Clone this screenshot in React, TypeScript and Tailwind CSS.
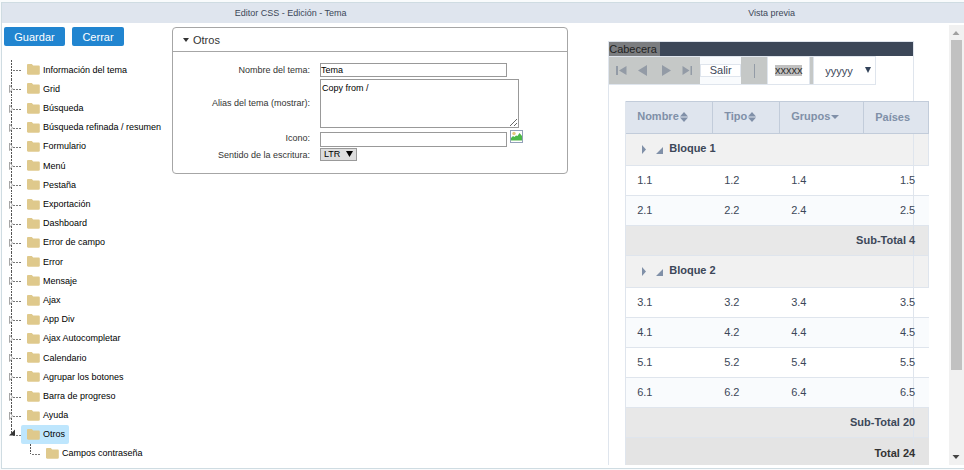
import React, { useState } from 'react';

const TREE_ITEMS = [
    'Información del tema',
    'Grid',
    'Búsqueda',
    'Búsqueda refinada / resumen',
    'Formulario',
    'Menú',
    'Pestaña',
    'Exportación',
    'Dashboard',
    'Error de campo',
    'Error',
    'Mensaje',
    'Ajax',
    'App Div',
    'Ajax Autocompletar',
    'Calendario',
    'Agrupar los botones',
    'Barra de progreso',
    'Ayuda',
    'Otros',
];

const BLOCKS = [
    {
        title: 'Bloque 1',
        rows: [
            ['1.1', '1.2', '1.4', '1.5'],
            ['2.1', '2.2', '2.4', '2.5'],
        ],
        subtotal: 'Sub-Total 4',
    },
    {
        title: 'Bloque 2',
        rows: [
            ['3.1', '3.2', '3.4', '3.5'],
            ['4.1', '4.2', '4.4', '4.5'],
            ['5.1', '5.2', '5.4', '5.5'],
            ['6.1', '6.2', '6.4', '6.5'],
        ],
        subtotal: 'Sub-Total 20',
    },
];

const FolderIcon = () => (
    <svg width="13" height="11" viewBox="0 0 13 11" fill="#dfc98c" className="shrink-0">
        <path d="M1.2 0h3.6l1.4 1.5h5.4c.8 0 1.2.5 1.2 1.2v6.8c0 .8-.4 1.2-1.2 1.2H1.2C.4 10.700 0 10.300 0 9.500V1.200C0 .4.4 0 1.200 0z" />
    </svg>
);

type BranchKind = 'first' | 'closed' | 'open' | 'leaf';

// Dotted connector on the left of every node
const Branch = ({ kind }: { kind: BranchKind }) => (
    <svg width="13" height="19" viewBox="0 0 13 19" fill="none" className="shrink-0">
        <path d={kind === 'open' || kind === 'leaf' ? 'M3.500 0v10' : 'M3.500 0v20'} stroke="#555" strokeDasharray="2 1" shapeRendering="crispEdges" />
        <path d="M5 10.500h8" stroke="#777" strokeDasharray="2 1" shapeRendering="crispEdges" />
        {kind === 'closed' && <path d="M1.500 6v7.500l3-3.700z" stroke="#a6a6a6" fill="#fff" />}
        {kind === 'open' && <path d="M7 4.500v6H1z" fill="#333" />}
    </svg>
);

const SortIcon = ({ down = false }: { down?: boolean }) => (
    <svg width="8" height="10" viewBox="0 0 8 10" fill="#8090a8" className="ml-px inline-block align-[-2px]">
        {!down && <path d="M4 0l4 4.500H0z" />}
        <path d={down ? 'M0 3h8L4 7z' : 'M0 5.500h8L4 10z'} />
    </svg>
);

const NavButton = ({ label, d }: { label: string; d: string }) => (
    <button type="button" aria-label={label} className="flex items-center justify-center">
        <svg width="11" height="11" viewBox="0 0 11 11" fill="#939ba6">
            <path d={d} />
        </svg>
    </button>
);

const Tree = () => {
    const [selected, setSelected] = useState('Otros');
    return (
        <div className="mt-3.5 whitespace-nowrap pl-1.5">
            <ul className="flex h-96 flex-col">
                {TREE_ITEMS.map((name, i) => (
                    <li key={name} className="flex flex-1 items-center">
                        <Branch kind={i === 0 ? 'first' : name === 'Otros' ? 'open' : 'closed'} />
                        <button
                            type="button"
                            onClick={() => setSelected(name)}
                            className={`flex h-full items-center gap-[3px] rounded-xs pl-1.5 pr-1 ${selected === name ? 'bg-[#bee6fd]' : ''}`}
                        >
                            <FolderIcon />
                            {name}
                        </button>
                    </li>
                ))}
            </ul>
            <div className="flex h-[18px] items-center pl-[19px]">
                <Branch kind="leaf" />
                <button type="button" className="flex items-center gap-[3px] pl-1.5">
                    <FolderIcon />
                    Campos contraseña
                </button>
            </div>
        </div>
    );
};

const ThemeForm = () => (
    <section className="mr-[11px] min-w-0 flex-1 self-start rounded-[4px] border border-[#a6a6a6] text-[#333]">
        <h2 className="flex h-6 items-center gap-1 border-b border-[#a6a6a6] pl-2.5 text-[11px]">
            <svg width="6" height="4" viewBox="0 0 6 4" fill="#333"><path d="M0 0h6L3 4z" /></svg>
            Otros
        </h2>
        <div className="grid grid-cols-[137px_1fr] gap-x-2.5 pb-3 pt-[11px]">
            <label htmlFor="name" className="self-center text-right">Nombre del tema:</label>
            <div>
                <input id="name" defaultValue="Tema" className="block h-3.5 w-[187px] border border-[#999] text-black" />
            </div>
            <label htmlFor="alias" className="self-center text-right">Alias del tema (mostrar):</label>
            <textarea id="alias" defaultValue="Copy from /" className="mt-0.5 block h-[49px] w-[199px] border border-[#999] px-px py-0.5 leading-3 text-black" />
            <label htmlFor="icon" className="self-center text-right">Icono:</label>
            <div className="flex items-start gap-[3px] pb-px pt-0.5">
                <input id="icon" className="mt-0.5 h-[15px] w-[187px] border border-[#999] text-black" />
                <button type="button" aria-label="Elegir icono">
                    <svg width="13" height="13" viewBox="0 0 13 13">
                        <rect x=".5" y=".5" width="12" height="12" fill="#fff" stroke="#93a0b8" />
                        <circle cx="4" cy="3.500" r="1.700" fill="#e5c77f" />
                        <path d="M1 10V8l2-2 1.500 1L6 5.500 7.500 6 9.500 3l2.500 3v4z" fill="#4cb848" />
                        <path d="M1 10.500h11" stroke="#a9dca6" />
                    </svg>
                </button>
            </div>
            <label htmlFor="dir" className="self-center text-right">Sentido de la escritura:</label>
            <div className="relative w-[37px]">
                <select id="dir" className="block h-[13px] w-full appearance-none border border-[#999] bg-[#ddd] pl-[3px] leading-[11px] text-black">
                    <option>LTR</option>
                    <option>RTL</option>
                </select>
                <svg width="7" height="6" viewBox="0 0 7 6" className="pointer-events-none absolute right-1 top-[3px]"><path d="M0 0h7L3.500 6z" /></svg>
            </div>
        </div>
    </section>
);

const Toolbar = () => (
    <div className="flex h-[29px] w-[267px] border-b border-r border-t border-[#dfe5ed] bg-[#c5c8c7]">
        <div className="flex w-[91px] items-center gap-[11px] pl-[7px]">
            <NavButton label="Primero" d="M0 1h2v9H0zM10.500 1v9L3 5.500z" />
            <NavButton label="Anterior" d="M9 0v11L0 5.500z" />
            <NavButton label="Siguiente" d="M2 0v11l9-5.500z" />
            <NavButton label="Último" d="M0.500 1v9L7.500 5.500zM8.500 1h1.500v9H8.500z" />
        </div>
        <div className="flex w-[41px] items-center bg-[#f9fbfd]">
            <button type="button" className="h-[13px] w-full border border-[#dfe5ed] bg-white leading-[11px]">Salir</button>
        </div>
        <div className="flex w-[26px] items-center justify-center">
            <span className="h-3.5 w-px bg-[#939ba6]" />
        </div>
        <div className="flex w-[43px] items-center justify-center border-x border-[#dfe5ed] bg-white">
            <span className="bg-[#c0c0c0] leading-[11px] text-[#333]">xxxxx</span>
        </div>
        <div className="w-[3px]" />
        <div className="relative flex-1 border-l border-[#dfe5ed] bg-white">
            <select aria-label="Opciones" className="h-full w-full appearance-none pl-[11px]">
                <option>yyyyy</option>
            </select>
            <svg width="6" height="6" viewBox="0 0 6 6" fill="#33435a" className="pointer-events-none absolute right-1 top-2.5"><path d="M0 0h6L3 6z" /></svg>
        </div>
    </div>
);

const PreviewTable = () => (
    <table className="ml-4 mt-4 w-[303px] table-fixed border-separate border-spacing-0 border-l border-[#dfe5ed]">
        <colgroup>
            <col className="w-[87px]" />
            <col className="w-[67px]" />
            <col className="w-[84px]" />
            <col className="w-[65px]" />
        </colgroup>
        <thead className="relative z-10 bg-[#dfe5ee] text-left text-[#8090a8]">
            <tr className="h-[33px]">
                <th className="border-y border-r border-[#c2ccda] pb-1 pl-[11px]">Nombre<SortIcon /></th>
                <th className="border-y border-r border-[#c2ccda] pb-1 pl-[11px]">Tipo<SortIcon /></th>
                <th className="border-y border-r border-[#c2ccda] pb-1 pl-[11px]">Grupos<SortIcon down /></th>
                <th className="border-y border-r border-[#c2ccda] pb-0.5 pl-[11px]">Países</th>
            </tr>
        </thead>
        {BLOCKS.map((block) => (
            <tbody key={block.title}>
                <tr className="h-8 bg-[#f1f1f1]">
                    <td colSpan={4} className="border-b border-r border-[#dfe5ed] pb-1 pl-3.5 font-bold">
                        <div className="flex items-end">
                            <svg width="23" height="9" viewBox="0 0 23 9" fill="#8090a8" className="mr-1.5">
                                <path d="M2 0l4 4.500L2 9zM23 2v7h-7z" />
                            </svg>
                            {block.title}
                        </div>
                    </td>
                </tr>
                {block.rows.map((row) => (
                    <tr key={row[0]} className="h-[30px] even:bg-white odd:bg-[#f9fbfd]">
                        <td className="border-b border-[#dfe5ed] pb-0.5 pl-[11px]">{row[0]}</td>
                        <td className="border-b border-[#dfe5ed] pb-0.5 pl-[11px]">{row[1]}</td>
                        <td className="border-b border-[#dfe5ed] pb-0.5 pl-[11px]">{row[2]}</td>
                        <td className="border-b border-[#dfe5ed] pb-0.5 pr-3.5 text-right"><span className="relative z-10">{row[3]}</span></td>
                    </tr>
                ))}
                <tr className="h-[30px] bg-[#e8e8e8]">
                    <td colSpan={4} className="border-b border-r border-[#dfe5ed] pb-0.5 pr-[13px] text-right font-bold"><span className="relative z-10">{block.subtotal}</span></td>
                </tr>
            </tbody>
        ))}
        <tfoot>
            <tr className="h-[30px] bg-[#e4e4e4] text-[#333]">
                <td colSpan={4} className="pr-3.5 text-right font-bold"><span className="relative z-10">Total 24</span></td>
            </tr>
        </tfoot>
    </table>
);

const App: React.FC = () => (
    <div className="flex h-screen flex-col bg-[#f9fbfc] pb-px pl-px pt-0.5 font-['Liberation_Sans',Arial,sans-serif] text-[9px] leading-3 text-black">
        <div className="flex min-h-0 flex-1 flex-col border-y border-l border-[#cfdce2] bg-white">
            <header className="grid h-5 shrink-0 grid-cols-[3fr_2fr] items-center bg-[#dfe5ee] text-center text-[#3c4758]">
                <h1>Editor CSS - Edición - Tema</h1>
                <h1>Vista previa</h1>
            </header>
            <main className="grid min-h-0 flex-1 grid-cols-[3fr_2fr]">
                <div className="flex min-h-0 pt-1">
                    <div className="w-[170px] shrink-0">
                        <div className="flex gap-[7px] pl-0.5 text-[11px] text-white">
                            <button type="button" className="h-[19px] w-[61px] rounded-[2px] bg-[#2185d0]">Guardar</button>
                            <button type="button" className="h-[19px] w-[52px] rounded-[2px] bg-[#2185d0]">Cerrar</button>
                        </div>
                        <Tree />
                    </div>
                    <ThemeForm />
                </div>

                {/* Preview with its scroll bar */}
                <div className="flex min-h-0 pb-[3px] pt-0.5">
                    <div className="min-w-0 flex-1 overflow-hidden pl-[29px] pt-4 text-[11px] text-[#3c4758]">
                        <div className="relative w-[306px] border border-[#dfe5ed]">
                            <div className="h-3.5 bg-[#3c4758] text-[#222]">
                                <span className="inline-block h-3.5 bg-[#7b7d80] pr-[3px] leading-3.5">Cabecera</span>
                            </div>
                            <Toolbar />
                            <PreviewTable />
                            <span className="absolute inset-y-0 -right-px w-px bg-[#dfe5ed]" />
                        </div>
                    </div>
                    <div className="flex w-[15px] shrink-0 flex-col items-center bg-[#f1f1f1]">
                        <svg width="8" height="15" viewBox="0 0 8 15" fill="#a0a0a0" className="shrink-0"><path d="M0.500 10h7L4 6z" /></svg>
                        <div className="h-3/4 w-[11px] bg-[#c1c1c1]" />
                        <svg width="8" height="15" viewBox="0 0 8 15" fill="#444" className="mt-auto shrink-0"><path d="M0.500 5h7L4 9z" /></svg>
                    </div>
                </div>
            </main>
        </div>
    </div>
);

export default App;
